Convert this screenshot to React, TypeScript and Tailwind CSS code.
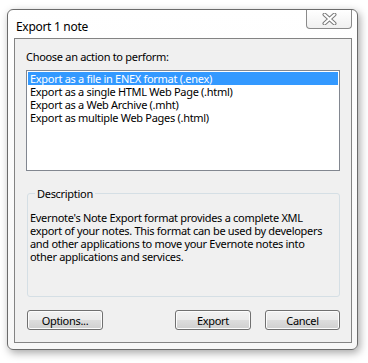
import React from "react";

const font = { fontFamily: '"Noto Sans", "Open Sans", sans-serif' };

function Btn({ children, w }: { children: React.ReactNode; w: string }) {
  return (
    <div
      className={`${w} h-[20px] rounded-[3px] border border-[#707070] bg-[linear-gradient(#f2f2f2_0%,#ebebeb_48%,#dddddd_52%,#cfcfcf_100%)] shadow-[inset_0_0_0_1px_#fcfcfc] flex items-center justify-center text-[11px] tracking-[-0.3px] text-black leading-none`}
    >
      {children}
    </div>
  );
}

export default function App() {
  const items = [
    "Export as a file in ENEX format (.enex)",
    "Export as a single HTML Web Page (.html)",
    "Export as a Web Archive (.mht)",
    "Export as multiple Web Pages (.html)",
  ];
  const desc = [
    "Evernote's Note Export format provides a complete XML",
    "export of your notes. This format can be used by developers",
    "and other applications to move your Evernote notes into",
    "other applications and services.",
  ];
  return (
    <div className="w-[368px] h-[363px] bg-white pt-[9px] pl-[7px] tracking-[-0.3px]" style={font}>
      <div className="w-[351px] h-[341px] border border-[#6b6b6b] rounded-[6px] bg-[linear-gradient(#ffffff,#f7f7f7)] shadow-[2px_3px_8px_rgba(0,0,0,0.35)] flex flex-col">
        <div className="h-[28px] flex items-start shrink-0">
          <div className="pl-[8px] pt-[9px] text-[12px] leading-[15px] text-black">Export 1 note</div>
          <div className="ml-auto mr-[5px] w-[46px] h-[19px] border border-t-0 border-[#8a8a8a] rounded-b-[4px] bg-[linear-gradient(#ffffff,#f0f0f0)] flex items-center justify-center">
            <svg width="15" height="12" viewBox="0 0 15 12">
              <path
                d="M2.5 1.5 L12.5 10.5 M12.5 1.5 L2.5 10.5"
                stroke="#7a7a7a"
                strokeWidth="4"
                strokeLinecap="round"
              />
              <path
                d="M2.5 1.5 L12.5 10.5 M12.5 1.5 L2.5 10.5"
                stroke="#ffffff"
                strokeWidth="2"
                strokeLinecap="round"
              />
            </svg>
          </div>
        </div>
        <div className="ml-[6px] mr-[5px] mb-[6px] flex-1 border border-[#838383] bg-[#f0f0f0] flex flex-col px-[11px] pt-[10px] text-[11px] text-black">
          <div className="leading-[15px]">Choose an action to perform:</div>
          <div className="mt-[6px] h-[101px] border border-[#828790] bg-white pt-[1px] px-[1px]">
            {items.map((t, i) => (
              <div
                key={t}
                className={`h-[13px] leading-[13px] pl-[2px] whitespace-nowrap ${
                  i === 0 ? "bg-[#3399ff] text-white" : ""
                }`}
              >
                {t}
              </div>
            ))}
          </div>
          <fieldset className="mt-[15px] ml-[1px] h-[111px] border border-[#d5dfe5] rounded-[3px] px-[2px]">
            <legend className="ml-[5px] px-[2px] leading-[15px] text-[11px]">Description</legend>
            <div className="mt-[10px] leading-[13px]">
              {desc.map((l) => (
                <div key={l} className="whitespace-nowrap">
                  {l}
                </div>
              ))}
            </div>
          </fieldset>
          <div className="mt-[13px] flex items-start ml-[1px]">
            <Btn w="w-[76px]">Options...</Btn>
            <div className="ml-auto">
              <Btn w="w-[76px]">Export</Btn>
            </div>
            <div className="ml-[14px]">
              <Btn w="w-[75px]">Cancel</Btn>
            </div>
          </div>
        </div>
      </div>
    </div>
  );
}
